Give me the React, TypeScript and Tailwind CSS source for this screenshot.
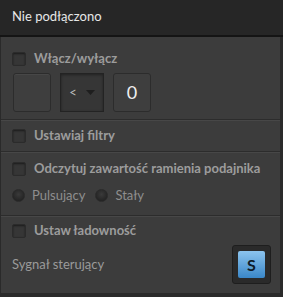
import { useState } from 'react';

function Check({ label, checked, onToggle }: { label: string; checked: boolean; onToggle: () => void }) {
  return (
    <button type="button" onClick={onToggle} className="flex h-[14px] items-center gap-[8px] text-left">
      <span className="flex h-[14px] w-[14px] shrink-0 items-center justify-center rounded-[2px] border border-[#2b2b2b] bg-[#363636] shadow-[inset_0_1px_2px_rgba(0,0,0,0.5)]">
        {checked ? <span className="h-[6px] w-[6px] bg-[#5aa0d8]" /> : null}
      </span>
      <span className="whitespace-nowrap text-[13px] font-bold text-[#9c9c9c]">{label}</span>
    </button>
  );
}

function Radio({ label, active, onPick }: { label: string; active: boolean; onPick: () => void }) {
  return (
    <button type="button" onClick={onPick} className="flex items-center gap-[7px]">
      <span className="h-[13px] w-[13px] rounded-full border border-[#2a2a2a] bg-[radial-gradient(circle_at_50%_40%,#3a3a3a,#1c1c1c)]">
        {active ? <span className="m-[3px] block h-[5px] w-[5px] rounded-full bg-[#5aa0d8]" /> : null}
      </span>
      <span className="text-[13px] text-[#8e8e8e]">{label}</span>
    </button>
  );
}

export default function App() {
  const [onOff, setOnOff] = useState(false);
  const [filters, setFilters] = useState(false);
  const [readArm, setReadArm] = useState(false);
  const [charge, setCharge] = useState(false);
  const [mode, setMode] = useState('');

  return (
    <main className="h-[297px] w-[283px] overflow-hidden bg-[#262626] font-['Lato',sans-serif]">
      <header className="flex h-[37px] items-center border-b-2 border-[#141414] px-[12px] pb-[1px] text-[13px] text-[#e6e6e6]">
        Nie podłączono
      </header>
      <div className="h-[260px] border-r-[3px] border-b-[4px] border-l-[1px] border-[#2a2a2a] bg-[#3c3c3c]">
        <section className="h-[83px] border-b border-[#2c2c2c] px-[11px] pt-[15px]">
          <Check label="Włącz/wyłącz" checked={onOff} onToggle={() => setOnOff(!onOff)} />
          <div className="mt-[7px] flex gap-[9px] pl-[1px]">
            <div className="h-[39px] w-[38px] rounded-[3px] border border-[#2c2c2c] bg-[#3e3e3e] shadow-[inset_0_1px_0_rgba(255,255,255,0.05)]" />
            <div className="flex h-[39px] w-[44px] items-center justify-center gap-[9px] border border-[#232323] bg-[#363636] shadow-[inset_0_1px_3px_rgba(0,0,0,0.4)]">
              <span className="text-[13px] text-[#bdbdbd]">&lt;</span>
              <svg width="9" height="5" viewBox="0 0 9 5"><path d="M0 0h9L4.5 5z" fill="#1e1e1e" /></svg>
            </div>
            <div className="flex h-[39px] w-[38px] items-center justify-center rounded-[3px] border border-[#2c2c2c] bg-[#3e3e3e] text-[18px] text-[#f0f0f0]">
              0
            </div>
          </div>
        </section>
        <section className="flex h-[32px] items-center border-t border-[#474747] border-b border-b-[#2c2c2c] px-[11px]">
          <Check label="Ustawiaj filtry" checked={filters} onToggle={() => setFilters(!filters)} />
        </section>
        <section className="h-[64px] border-t border-[#474747] border-b border-b-[#2c2c2c] px-[11px] pt-[9px]">
          <Check label="Odczytuj zawartość ramienia podajnika" checked={readArm} onToggle={() => setReadArm(!readArm)} />
          <div className="mt-[10px] flex gap-[10px]">
            <Radio label="Pulsujący" active={mode === 'p'} onPick={() => setMode('p')} />
            <Radio label="Stały" active={mode === 's'} onPick={() => setMode('s')} />
          </div>
        </section>
        <section className="border-t border-[#474747] px-[11px] pt-[7px]">
          <Check label="Ustaw ładowność" checked={charge} onToggle={() => setCharge(!charge)} />
          <div className="mt-[7px] flex items-center justify-between">
            <span className="text-[13px] text-[#9a9a9a]">Sygnał sterujący</span>
            <div className="mr-[-2px] rounded-[3px] border border-[#1e1e1e] bg-[#2a2a2a] p-[5px]">
              <div className="flex h-[27px] w-[27px] items-center justify-center rounded-[2px] bg-[linear-gradient(#8cc4ee,#3a87c8)] text-[16px] font-bold text-[#0e1a26]">
                S
              </div>
            </div>
          </div>
        </section>
      </div>
    </main>
  );
}
